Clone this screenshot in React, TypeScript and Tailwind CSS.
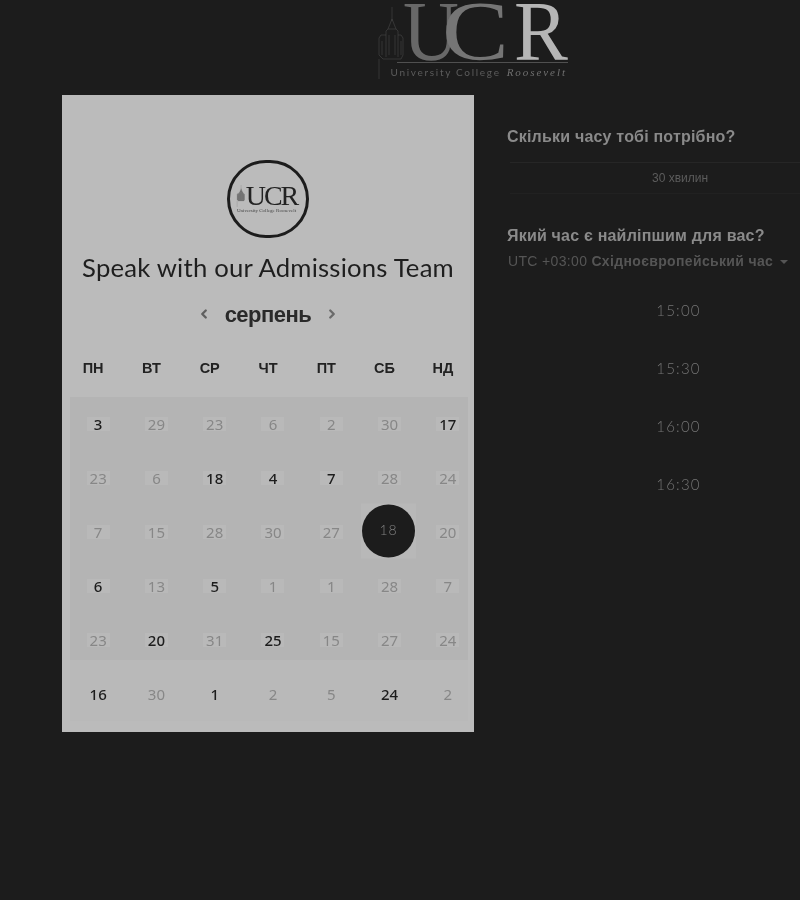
import React from 'react';
import { ChevronLeft, ChevronRight } from 'lucide-react';

const SANS = "font-['Liberation_Sans',Arial,sans-serif]";
const DIGITS = "font-['Noto_Sans',sans-serif]";

const weekdays = ['ПН', 'ВТ', 'СР', 'ЧТ', 'ПТ', 'СБ', 'НД'];

// [day, active]
const days: [number, boolean][] = [
  [3, true], [29, false], [23, false], [6, false], [2, false], [30, false], [17, true],
  [23, false], [6, false], [18, true], [4, true], [7, true], [28, false], [24, false],
  [7, false], [15, false], [28, false], [30, false], [27, false], [18, false], [20, false],
  [6, true], [13, false], [5, true], [1, false], [1, false], [28, false], [7, false],
  [23, false], [20, true], [31, false], [25, true], [15, false], [27, false], [24, false],
  [16, true], [30, false], [1, true], [2, false], [5, false], [24, true], [2, false],
];

const times = ['15:00', '15:30', '16:00', '16:30'];

function Tower({ className }: { className?: string }) {
  return (
    <svg viewBox="0 0 28 72" fill="none" stroke="currentColor" strokeWidth="0.6" className={className}>
      <path d="M16 0V14M12 22L16 12L20 22M10 50V24L12 22H20L22 24V50" />
      <path d="M10 28H5L3 31V48L7 52H25L27 48V31L25 28H22" />
      <path d="M13 28V48M19 28V48M6 34V48M25 34V48" />
      <path d="M3 52V72" />
    </svg>
  );
}

function Logo() {
  return (
    <div className="flex h-[95px] items-start justify-center pl-[173px]">
      <div className="relative w-[168px]">
        <Tower className="absolute left-[-27px] top-[7px] h-[72px] w-[28px] text-[#484848]" />
        <div className="flex font-['Liberation_Serif',serif] text-[85px] leading-[62px]">
          <span className="mr-[-22.4px] origin-left scale-x-[0.91] text-[#686868]">U</span>
          <span className="origin-left scale-x-[1.18] text-[#757575]">C</span>
          <span className="ml-[16px] origin-left scale-x-[0.95] text-[#b5b5b5]">R</span>
        </div>
        <div className="ml-[-6px] h-px w-[171px] bg-[#505050]"></div>
        <div className="mt-[2px] ml-[-12px] flex items-center whitespace-nowrap text-[#5c5c5c]">
          <span className="font-['Lato',sans-serif] text-[10px] leading-[14px] tracking-[1.7px]">University College</span>
          <span className="ml-[6px] font-['Liberation_Serif',serif] text-[11px] leading-[14px] italic tracking-[1.95px] text-[#707070]">Roosevelt</span>
        </div>
      </div>
    </div>
  );
}

function SmallBadge() {
  return (
    <div className="flex h-[78px] w-[82px] flex-col items-center justify-center rounded-full border-[3.5px] border-[#1c1c1c] pr-[3px]">
      <div className="flex items-center">
        <Tower className="mr-[1px] h-[22px] w-[9px] fill-[#777777] text-[#555555]" />
        <span className="font-['Liberation_Serif',serif] text-[28px] leading-[24px] tracking-[-2px] text-[#222222]">UCR</span>
      </div>
      <span className="whitespace-nowrap font-['Liberation_Serif',serif] text-[5px] leading-[6px] text-[#444444]">University College Roosevelt</span>
    </div>
  );
}

function Calendar() {
  return (
    <div className="flex h-[637px] w-[412px] shrink-0 flex-col items-center bg-[#bbbbbb] pt-[65px]">
      <SmallBadge />
      <h1 className="mt-[13px] whitespace-nowrap font-['Lato',sans-serif] text-[25.7px] leading-[32px] tracking-[0.2px] text-[#1e1e1e]">
        Speak with our Admissions Team
      </h1>
      <div className="mt-[15px] flex h-[32px] items-center">
        <ChevronLeft size={14} strokeWidth={4} className="text-[#5f5f5f]" />
        <span className={`${SANS} mx-[14px] text-[22px] font-bold tracking-[-0.5px] text-[#2a2a2a]`}>серпень</span>
        <ChevronRight size={14} strokeWidth={4} className="text-[#6a6a6a]" />
      </div>
      <div className="mt-[13px] grid h-[54px] w-[408px] grid-cols-7 items-center justify-items-center">
        {weekdays.map(d => (
          <span key={d} className={`${SANS} pb-[2px] text-[14.5px] font-bold text-[#222222]`}>{d}</span>
        ))}
      </div>
      <div className="w-[398px] translate-x-[1px] bg-[linear-gradient(#b4b4b4_263px,#b9b9b9_263px)]">
        <div className="ml-[-1px] grid w-[408px] grid-cols-7">
          {days.map(([day, active], i) => {
            const selected = i === 19;
            return (
              <div key={i} className="flex h-[54px] items-center justify-center">
                {selected ? (
                  <div className="-translate-x-px -translate-y-[1.5px] bg-[#b8b8b8] p-px">
                    <span className="flex h-[53px] w-[53px] items-center justify-center rounded-full bg-[#1c1c1c] pb-[3px] font-['Lato',sans-serif] text-[14px] font-light tracking-[1px] text-[#808080]">
                      {day}
                    </span>
                  </div>
                ) : (
                  <span
                    className={`${DIGITS} flex h-[14px] w-[23px] items-center justify-center bg-[#b9b9b9] text-[15px] ${
                      active ? 'font-medium text-[#1c1c1c]' : 'font-normal text-[#878787]'
                    }`}
                  >
                    {day}
                  </span>
                )}
              </div>
            );
          })}
        </div>
      </div>
    </div>
  );
}

function Sidebar() {
  return (
    <div className={`${SANS} ml-[33px] min-w-0 flex-1`}>
      <h2 className="mt-[32px] whitespace-nowrap text-[16px] leading-[20px] font-bold tracking-[0.2px] text-[#8a8a8a]">
        Скільки часу тобі потрібно?
      </h2>
      <div className="mt-[15px] ml-[3px] flex h-[32px] items-center justify-center border-t border-b border-t-[#262626] border-b-[#212121] pl-[50px] text-[12px] text-[#5c5c5c]">
        <span>30 хвилин</span>
      </div>
      <h2 className="mt-[32px] whitespace-nowrap text-[16px] leading-[20px] font-bold tracking-[0.2px] text-[#8a8a8a]">
        Який час є найліпшим для вас?
      </h2>
      <div className="mt-[5px] ml-[1px] flex items-center whitespace-nowrap text-[14px] leading-[20px] tracking-[0.35px] text-[#555555]">
        <span>UTC +03:00</span>
        <span className="ml-[4px] font-bold">Східноєвропейський час</span>
        <span className="ml-[7px] mt-[1px] h-0 w-0 border-x-[4px] border-t-[4px] border-x-transparent border-t-[#555555]"></span>
      </div>
      <ul className="mt-[10px] pl-[50px]">
        {times.map(t => (
          <li key={t} className="flex h-[58px] items-center justify-center font-['Lato',sans-serif] text-[15px] font-light tracking-[1.2px] text-[#747474]">
            {t}
          </li>
        ))}
      </ul>
    </div>
  );
}

export default function App() {
  return (
    <div className="h-[900px] w-[800px] overflow-hidden bg-[#1c1c1c] grayscale">
      <Logo />
      <div className="flex pl-[62px]">
        <Calendar />
        <Sidebar />
      </div>
    </div>
  );
}
